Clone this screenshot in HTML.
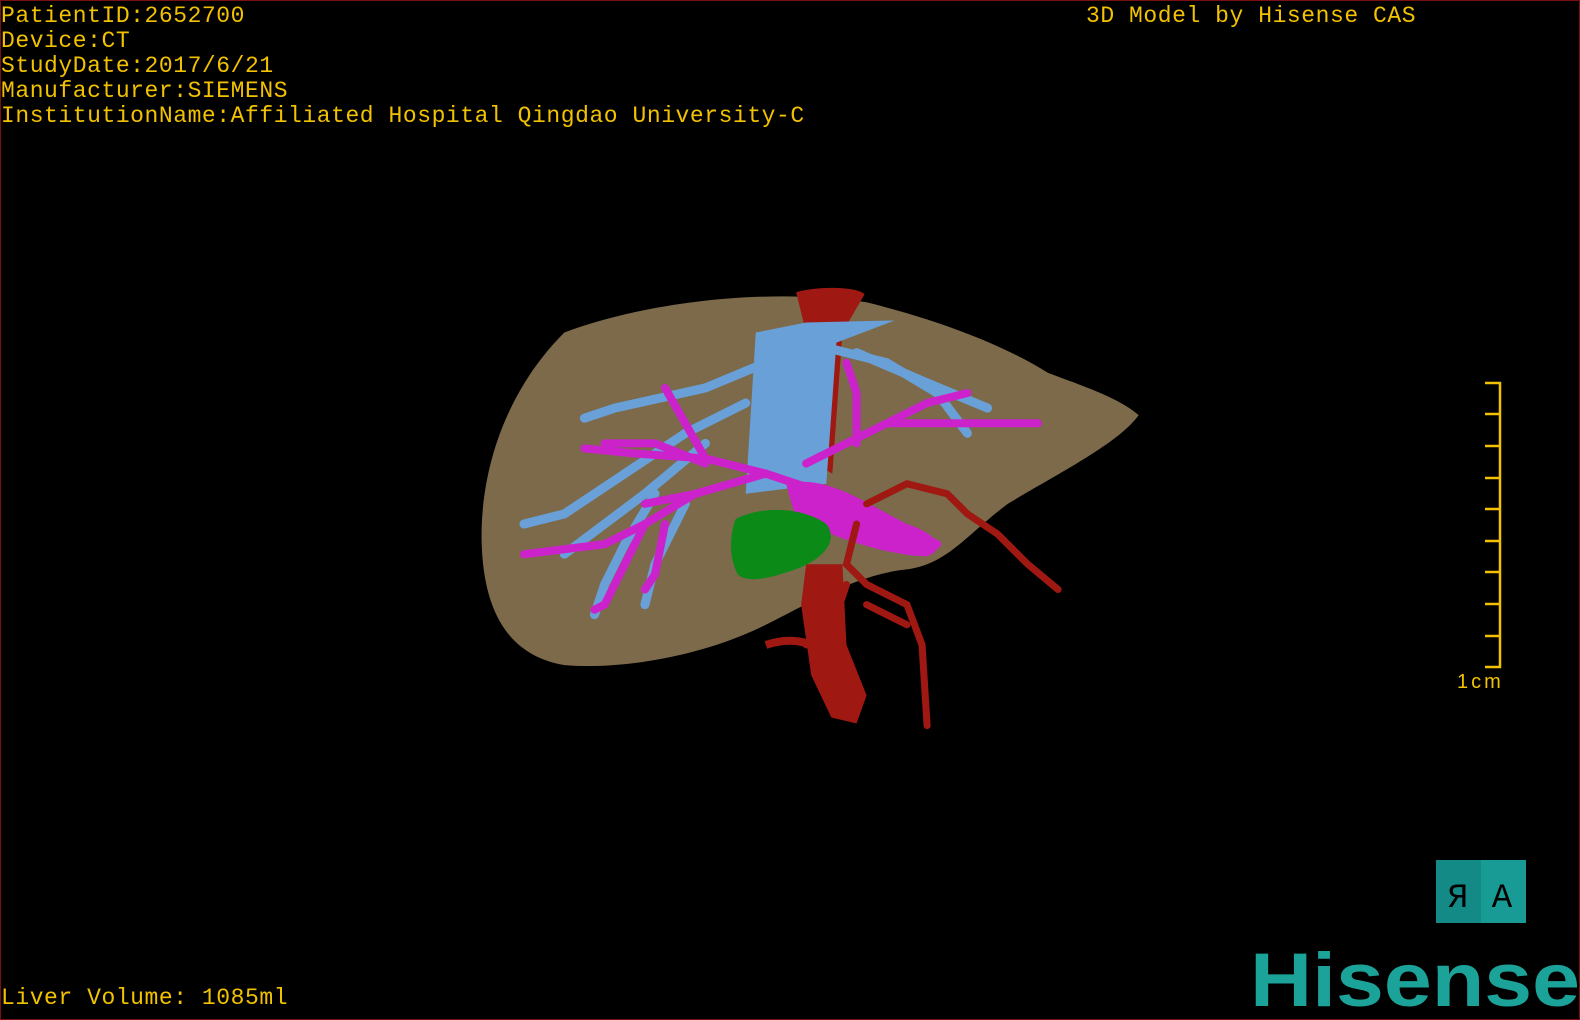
<!DOCTYPE html>
<html><head><meta charset="utf-8"><style>
html,body{margin:0;padding:0;background:#000;width:1580px;height:1020px;overflow:hidden}
.frame{position:absolute;left:0;top:0;width:1578px;height:1018px;border:1px solid #7a1010;background:#000}
.t{position:absolute;color:#f2c200;font-family:"Liberation Mono",monospace;font-size:23px;line-height:25px;white-space:pre;letter-spacing:0.55px}
</style></head><body>
<div class="frame"></div>
<div class="t" style="left:1px;top:4px">PatientID:2652700
Device:CT
StudyDate:2017/6/21
Manufacturer:SIEMENS
InstitutionName:Affiliated Hospital Qingdao University-C</div>
<div class="t" style="left:1086px;top:4px">3D Model by Hisense CAS</div>
<div class="t" style="left:1px;top:986px">Liver Volume: 1085ml</div>
<svg width="1580" height="1020" style="position:absolute;left:0;top:0">
<g transform="scale(1.0077)">
<path d="M560 330 C640 300 760 285 860 300 C940 320 1000 345 1040 370 C1080 385 1110 395 1130 412 C1110 440 1050 470 1000 500 C960 530 940 560 900 565 C850 570 800 600 760 620 C700 650 620 665 560 660 C500 650 480 600 478 540 C476 470 500 390 560 330Z" fill="#8a7552" opacity="0.9"/>
<path d="M790 290 C810 284 850 284 858 292 L836 330 L826 470 L808 460 L800 330Z" fill="#a01812"/>
<path d="M800 560 L836 560 L840 640 L860 690 L850 718 L825 712 L805 670 L795 600Z" fill="#a01812"/>
<path d="M760 640 C790 630 810 640 820 650" stroke="#a01812" stroke-width="8" fill="none"/>
<path d="M750 330 L800 320 L888 318 L830 340 L820 480 L740 490Z" fill="#6aa0d8"/>
<g stroke="#6aa0d8" stroke-width="9" fill="none" stroke-linecap="round">
<path d="M760 360 L700 385 L610 405 L580 415"/>
<path d="M740 400 L680 430 L620 470 L560 510 L520 520"/>
<path d="M700 440 L640 490 L600 520 L560 550"/>
<path d="M650 490 L620 540 L600 580 L590 610"/>
<path d="M680 500 L650 560 L640 600"/>
<path d="M820 345 L880 360 L930 390 L960 430"/>
<path d="M850 350 L920 380 L980 405"/>
<path d="M790 370 L770 420 L760 450"/>
</g>
<g stroke="#cc22cc" stroke-width="8" fill="none" stroke-linecap="round">
<path d="M930 540 L880 520 L820 490 L760 470 L690 490 L640 500"/>
<path d="M760 470 L700 455 L630 450 L580 445"/>
<path d="M700 455 L680 420 L660 385"/>
<path d="M690 490 L640 520 L600 540 L520 550"/>
<path d="M640 520 L620 560 L600 600 L590 605"/>
<path d="M660 520 L650 570 L640 585"/>
<path d="M800 460 L840 440 L880 420 L940 420 L1030 420"/>
<path d="M850 440 L850 390 L840 360"/>
<path d="M880 420 L920 400 L960 390"/>
<path d="M700 460 L650 440 L600 440"/>
</g>
<path d="M780 480 C820 470 860 500 900 520 C930 530 940 545 920 552 C880 552 820 530 790 515Z" fill="#cc22cc"/>
<g stroke="#a01812" stroke-width="7" fill="none" stroke-linecap="round">
<path d="M850 520 L840 560 L860 580 L900 600 L915 640 L920 720"/>
<path d="M860 500 L900 480 L940 490 L960 510 L990 530 L1020 560 L1050 585"/>
<path d="M840 580 L830 610 L800 640"/>
<path d="M860 600 L880 610 L900 620"/>
</g>
<path d="M730 515 C760 500 800 505 820 520 C835 540 810 560 780 568 C760 575 740 578 732 570 C722 550 725 530 730 515Z" fill="#0c8a18"/>
</g>
<g stroke="#f2c200" stroke-width="2.5" fill="none">
<path d="M1485 383 L1500 383 L1500 667 L1485 667"/>
<path d="M1485 414h15M1485 446h15M1485 478h15M1485 509h15M1485 541h15M1485 572h15M1485 604h15M1485 636h15"/>
</g>
<text x="1457" y="688" fill="#f2c200" font-family="Liberation Sans,sans-serif" font-size="20" letter-spacing="3">1cm</text>
<rect x="1436" y="860" width="45" height="63" fill="#138a86"/>
<rect x="1481" y="860" width="45" height="63" fill="#199b95"/>
<text x="1458" y="907" fill="#000" font-family="Liberation Mono,monospace" font-size="34" text-anchor="middle">Я</text>
<text x="1502" y="907" fill="#000" font-family="Liberation Mono,monospace" font-size="34" text-anchor="middle">A</text>
<text x="1250" y="1006" fill="#1ba39a" font-family="Liberation Sans,sans-serif" font-weight="bold" font-size="76" textLength="330" lengthAdjust="spacingAndGlyphs">Hisense</text>
</svg>
</body></html>
